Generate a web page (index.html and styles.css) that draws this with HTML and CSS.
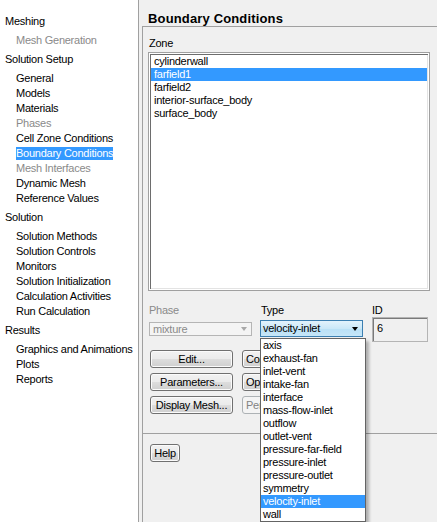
FILE: index.html
```html
<!DOCTYPE html>
<html>
<head>
<meta charset="utf-8">
<link rel="stylesheet" href="styles.css">
</head>
<body>
<div class="app">
  <nav class="tree">
    <div class="group">
      <div class="hdr">Meshing</div>
      <div class="item dis">Mesh Generation</div>
    </div>
    <div class="group">
      <div class="hdr">Solution Setup</div>
      <div class="item">General</div>
      <div class="item">Models</div>
      <div class="item">Materials</div>
      <div class="item dis">Phases</div>
      <div class="item">Cell Zone Conditions</div>
      <div class="item"><span class="hl">Boundary Conditions</span></div>
      <div class="item dis">Mesh Interfaces</div>
      <div class="item">Dynamic Mesh</div>
      <div class="item">Reference Values</div>
    </div>
    <div class="group">
      <div class="hdr">Solution</div>
      <div class="item">Solution Methods</div>
      <div class="item">Solution Controls</div>
      <div class="item">Monitors</div>
      <div class="item">Solution Initialization</div>
      <div class="item">Calculation Activities</div>
      <div class="item">Run Calculation</div>
    </div>
    <div class="group">
      <div class="hdr">Results</div>
      <div class="item">Graphics and Animations</div>
      <div class="item">Plots</div>
      <div class="item">Reports</div>
    </div>
  </nav>
  <main class="panel">
    <div class="title">Boundary Conditions</div>
    <div class="body">
      <div class="zone-label">Zone</div>
      <div class="listbox">
        <div class="opt">cylinderwall</div>
        <div class="opt sel">farfield1</div>
        <div class="opt">farfield2</div>
        <div class="opt">interior-surface_body</div>
        <div class="opt">surface_body</div>
      </div>
      <div class="fields">
        <div class="field f-phase">
          <div class="lbl dis">Phase</div>
          <div class="combo combo-dis"><span class="ctext">mixture</span><span class="arrow"></span></div>
        </div>
        <div class="field f-type">
          <div class="lbl">Type</div>
          <div class="combo combo-hot"><span class="ctext">velocity-inlet</span><span class="arrow"></span></div>
        </div>
        <div class="field f-id">
          <div class="lbl">ID</div>
          <div class="idbox">6</div>
        </div>
      </div>
      <div class="buttons">
        <div class="bcol bcol1">
          <div class="btn">Edit...</div>
          <div class="btn">Parameters...</div>
          <div class="btn">Display Mesh...</div>
        </div>
        <div class="bcol bcol2">
          <div class="btn btn-auto">Copy...</div>
          <div class="btn btn-auto">Operating Conditions...</div>
          <div class="btn btn-auto btn-dis">Periodic Conditions...</div>
        </div>
      </div>
      <div class="sep"></div>
      <div class="help-row"><div class="btn btn-help">Help</div></div>
    </div>
    <div class="dropdown">
      <div class="dd-item">axis</div>
      <div class="dd-item">exhaust-fan</div>
      <div class="dd-item">inlet-vent</div>
      <div class="dd-item">intake-fan</div>
      <div class="dd-item">interface</div>
      <div class="dd-item">mass-flow-inlet</div>
      <div class="dd-item">outflow</div>
      <div class="dd-item">outlet-vent</div>
      <div class="dd-item">pressure-far-field</div>
      <div class="dd-item">pressure-inlet</div>
      <div class="dd-item">pressure-outlet</div>
      <div class="dd-item">symmetry</div>
      <div class="dd-item dd-sel">velocity-inlet</div>
      <div class="dd-item">wall</div>
    </div>
  </main>
</div>
</body>
</html>
```

FILE: styles.css
```css
html, body {
  margin: 0;
  padding: 0;
}
body {
  width: 437px;
  height: 522px;
  overflow: hidden;
  font-family: "Liberation Sans", Arial, sans-serif;
  font-size: 11px;
  letter-spacing: -0.25px;
  color: #000;
  background: #f0f0f0;
}
.app {
  display: flex;
  height: 522px;
}

/* left tree */
.tree {
  width: 138px;
  flex: none;
  background: #fff;
  border-right: 1px solid #a0a0a0;
  padding-top: 14px;
  box-sizing: content-box;
}
.group {
  margin-bottom: 4px;
}
.hdr {
  line-height: 15px;
  height: 15px;
  padding-left: 5px;
  margin-bottom: 4px;
  white-space: nowrap;
}
.item {
  line-height: 15px;
  height: 15px;
  padding-left: 16px;
  white-space: nowrap;
}
.dis {
  color: #8a8a8a;
}
.hl {
  display: inline-block;
  vertical-align: top;
  margin-top: 1px;
  line-height: 13px;
  height: 13px;
  background: #3399ff;
  color: #fff;
}

/* right panel */
.panel {
  flex: 1;
  position: relative;
  display: flex;
  flex-direction: column;
  background: #f0f0f0;
}
.title {
  height: 26px;
  box-sizing: border-box;
  padding: 11px 0 0 9px;
  font-weight: bold;
  font-size: 13px;
  line-height: 15px;
  letter-spacing: 0.15px;
  white-space: nowrap;
}
.body {
  flex: 1;
  margin-left: 3px;
  border-top: 1px solid #a0a0a0;
  border-left: 1px solid #a0a0a0;
  display: flex;
  flex-direction: column;
}
.zone-label {
  margin: 10px 0 2px 6px;
  line-height: 13px;
  height: 13px;
}
.listbox {
  margin-left: 5px;
  width: 282px;
  height: 239px;
  box-sizing: border-box;
  border: 1px solid #a0a0a0;
  padding: 2px;
  background: #fff;
  box-shadow: inset 0 0 0 1px #fff, inset 2px 2px 0 #6d6d6d, inset -2px -2px 0 #e3e3e3;
}
.opt {
  line-height: 13px;
  height: 13px;
  padding-left: 3px;
  white-space: nowrap;
}
.opt.sel {
  background: #3399ff;
  color: #fff;
}

.fields {
  display: flex;
  margin-top: 13px;
  padding-left: 6px;
  align-items: flex-start;
}
.field {
  display: flex;
  flex-direction: column;
}
.f-phase { width: 103px; }
.f-type { width: 103px; margin-left: 8px; }
.f-id { width: 56px; margin-left: 9px; }
.lbl {
  line-height: 13px;
  height: 13px;
  white-space: nowrap;
}
.f-type .lbl { padding-left: 1px; }

.combo {
  display: flex;
  align-items: center;
  justify-content: space-between;
  box-sizing: border-box;
  white-space: nowrap;
}
.combo-dis {
  margin-top: 5px;
  height: 14px;
  border: 1px solid #b5b5b5;
  background: #f4f4f4;
  color: #8a8a8a;
  padding: 0 3px 0 3px;
  line-height: 10px;
}
.combo-dis .arrow {
  border-top-color: #a8a8a8;
}
.combo-hot {
  margin-top: 3px;
  height: 17px;
  border: 1px solid #3c7fb1;
  background: linear-gradient(#e3f3fc, #cbe8f8 50%, #b9e0f6 51%, #c6e6f8);
  padding: 0 3px 0 2px;
  line-height: 15px;
}
.arrow {
  width: 0;
  height: 0;
  border-left: 3px solid transparent;
  border-right: 3px solid transparent;
  border-top: 4px solid #000;
  margin-right: 1px;
}
.idbox {
  height: 25px;
  box-sizing: border-box;
  border: 1px solid #b4b4b4;
  background: #f0f0f0;
  box-shadow: inset 1px 1px 0 #7a7a7a;
  padding: 4px 0 0 4px;
  line-height: 13px;
}

.buttons {
  display: flex;
  margin-top: 8px;
  padding-left: 7px;
  align-items: flex-start;
}
.bcol {
  display: flex;
  flex-direction: column;
  gap: 5px;
}
.bcol1 { width: 83px; }
.bcol2 { margin-left: 9px; align-items: flex-start; }
.btn {
  height: 18px;
  box-sizing: border-box;
  border: 1px solid #707070;
  border-radius: 3px;
  background: linear-gradient(#f2f2f2 0%, #ebebeb 48%, #dddddd 52%, #cfcfcf 100%);
  box-shadow: inset 0 0 0 1px #fbfbfb;
  text-align: center;
  line-height: 17px;
  white-space: nowrap;
  overflow: hidden;
}
.btn-auto {
  padding: 0 3px;
}
.btn-dis {
  border-color: #adb2b5;
  background: #f4f4f4;
  color: #838383;
  box-shadow: none;
}
.sep {
  margin-top: 19px;
  border-top: 1px solid #a0a0a0;
}
.help-row {
  margin-top: 10px;
  padding-left: 7px;
  display: flex;
}
.btn-help {
  width: 30px;
}

/* open combo list */
.dropdown {
  position: absolute;
  left: 121px;
  top: 338px;
  width: 106px;
  box-sizing: border-box;
  border: 1px solid #646464;
  background: #fff;
  box-shadow: 3px 3px 3px rgba(0, 0, 0, 0.28);
}
.dd-item {
  line-height: 13px;
  height: 13px;
  padding-left: 2px;
  white-space: nowrap;
}
.dd-item.dd-sel {
  background: #3399ff;
  color: #fff;
}
```
